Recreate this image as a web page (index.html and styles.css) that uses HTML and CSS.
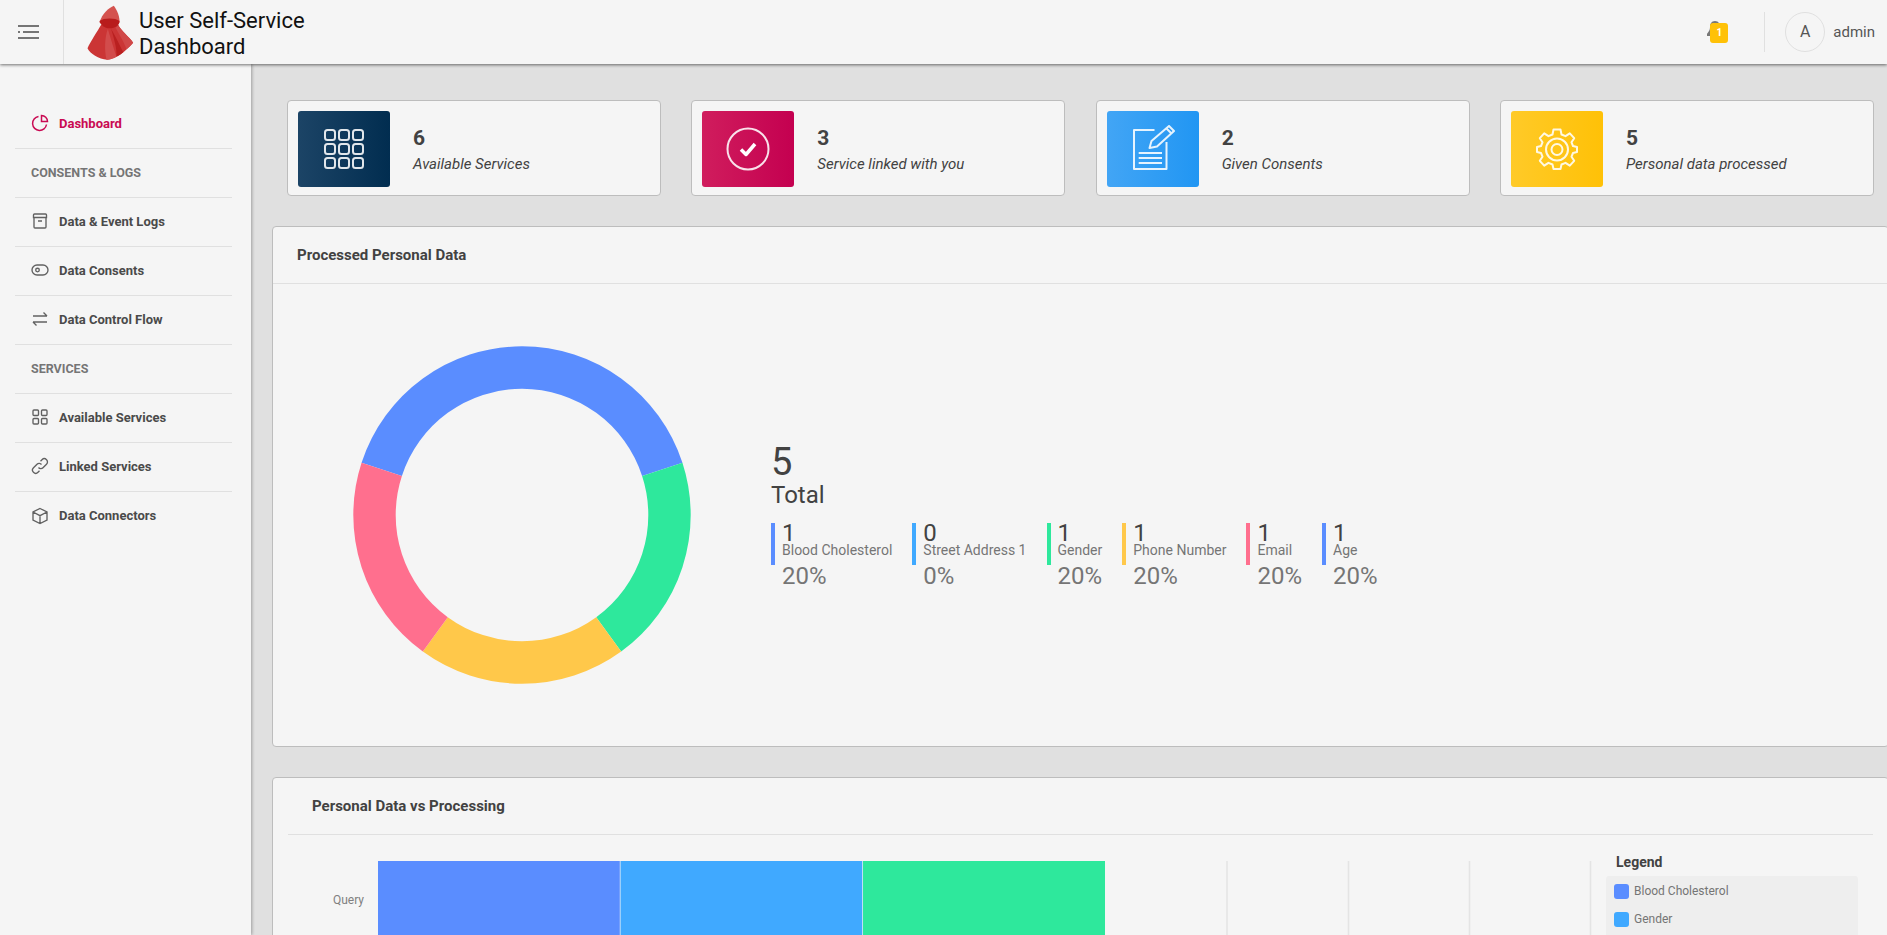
FILE: index.html
```html
<!DOCTYPE html>
<html lang="en">
<head>
  <meta charset="UTF-8" />
  <meta name="viewport" content="width=device-width, initial-scale=1.0"/>
  <title>User Self-Service Dashboard</title>
  <link rel="stylesheet" href="styles.css">
</head>
<body>

  <div class="app">
    <div class="header">
      <div class="menu-btn">
        <svg width="22" height="16" viewBox="0 0 22 16" class="menu-icon">
          <path d="M0 2h21M0 8h2M5 8h16M0 14h21"/>
        </svg>
      </div>
      <div class="brand">
        <svg class="logo" width="47" height="55" viewBox="260 20 140 165">
          <path fill="#cb3535" d="M303 78C290 100 270 130 261 150C268 165 295 184 320 184C345 182 375 160 398 133C385 115 360 95 352 78C340 90 315 90 303 78Z"/>
          <path fill="#d24c4c" d="M322 92C312 120 312 155 318 184C330 183 340 180 348 175C340 150 330 120 322 92Z"/>
          <path fill="#b92020" d="M332 92C340 120 350 150 348 175C355 172 362 167 368 162C358 140 345 115 332 92Z"/>
          <path fill="#d04848" d="M345 88C358 110 372 135 378 153C385 147 392 140 398 133C385 115 362 98 352 78Z"/>
          <path fill="#d4524e" d="M340 22C325 28 305 45 297 72C305 85 345 90 357 72C358 55 350 35 340 22Z"/>
          <path fill="#b81c1c" d="M297 68C310 58 345 58 357 68C358 80 345 90 327 90C312 90 300 80 297 68Z"/>
        </svg>
        <div class="brand-name">User Self-Service<br>Dashboard</div>
      </div>
      <div class="header-right">
        <div class="bell">
          <svg width="16" height="18" viewBox="0 0 16 18"><path fill="#777" d="M8 0C4.5 0 3 3 3 6C3 10 1 11 0 13V15H16V13C15 11 13 10 13 6C13 3 11.500 0 8 0Z"/></svg>
          <span class="badge">1</span>
        </div>
        <div class="user">
          <div class="avatar">A</div>
          <span class="user-name">admin</span>
        </div>
      </div>
    </div>

    <div class="layout">
      <div class="sidebar">
        <a class="nav-item active">
          <svg class="nav-icon" viewBox="0 0 18 18"><path d="M7.500 2.500A7 7 0 1 0 15.500 10.500"/><path d="M10.500 1.500A6 6 0 0 1 16.500 7.500H10.500Z"/></svg>
          Dashboard
        </a>
        <div class="nav-title">CONSENTS &amp; LOGS</div>
        <a class="nav-item">
          <svg class="nav-icon" viewBox="0 0 18 18"><path d="M3.500 2h11a1 1 0 0 1 1 1v2.500h-13V3a1 1 0 0 1 1-1zM3 5.500V15a1 1 0 0 0 1 1h10a1 1 0 0 0 1-1V5.500M7 9h4"/></svg>
          Data &amp; Event Logs
        </a>
        <a class="nav-item">
          <svg class="nav-icon" viewBox="0 0 18 18"><rect x="1" y="4" width="16" height="10" rx="5"/><circle cx="6.500" cy="9" r="1.800"/></svg>
          Data Consents
        </a>
        <a class="nav-item">
          <svg class="nav-icon" viewBox="0 0 18 18"><path d="M2 6h14M12.500 2.500L16 6M16 12H2M5.500 15.500L2 12"/></svg>
          Data Control Flow
        </a>
        <div class="nav-title">SERVICES</div>
        <a class="nav-item">
          <svg class="nav-icon" viewBox="0 0 18 18"><rect x="2" y="2" width="5.500" height="5.500" rx="1"/><rect x="10.500" y="2" width="5.500" height="5.500" rx="1"/><rect x="2" y="10.500" width="5.500" height="5.500" rx="1"/><rect x="10.500" y="10.500" width="5.500" height="5.500" rx="1"/></svg>
          Available Services
        </a>
        <a class="nav-item">
          <svg class="nav-icon" viewBox="0 0 18 18"><path d="M7.500 10.500A3 3 0 0 0 12 10.800L15.500 7.300A3.200 3.200 0 0 0 11 2.700L9.500 4.200"/><path d="M10.500 7.500A3 3 0 0 0 6 7.200L2.500 10.700A3.200 3.200 0 0 0 7 15.300L8.500 13.800"/></svg>
          Linked Services
        </a>
        <a class="nav-item">
          <svg class="nav-icon" viewBox="0 0 18 18"><path d="M9 1.500L16 5V13L9 16.500L2 13V5ZM2 5L9 8.700L16 5M9 8.700V16.500"/></svg>
          Data Connectors
        </a>
      </div>

      <div class="main">
        <div class="stats">
          <div class="stat-card">
            <div class="stat-icon navy">
              <svg width="42" height="42" viewBox="0 0 42 42" class="white-icon">
                <rect x="2" y="2" width="10" height="10" rx="2.500"/><rect x="16" y="2" width="10" height="10" rx="2.500"/><rect x="30" y="2" width="10" height="10" rx="2.500"/>
                <rect x="2" y="16" width="10" height="10" rx="2.500"/><rect x="16" y="16" width="10" height="10" rx="2.500"/><rect x="30" y="16" width="10" height="10" rx="2.500"/>
                <rect x="2" y="30" width="10" height="10" rx="2.500"/><rect x="16" y="30" width="10" height="10" rx="2.500"/><rect x="30" y="30" width="10" height="10" rx="2.500"/>
              </svg>
            </div>
            <div class="stat-text"><b>6</b><i>Available Services</i></div>
          </div>
          <div class="stat-card">
            <div class="stat-icon pink">
              <svg width="44" height="44" viewBox="0 0 44 44" class="white-icon">
                <circle cx="22" cy="22" r="20.500"/>
                <path class="thick" d="M15 22.500L20 27.500L29 17"/>
              </svg>
            </div>
            <div class="stat-text"><b>3</b><i>Service linked with you</i></div>
          </div>
          <div class="stat-card">
            <div class="stat-icon blue">
              <svg width="44" height="48" viewBox="0 0 44 48" class="white-icon">
                <path d="M23.500 5H3V44H35.500V17"/>
                <path d="M7.700 28H31M7.700 33H31M7.700 38H31"/>
                <path d="M18.500 23L20.500 16L38 1L43 6L26 21.500ZM35.500 3.500L40.500 8.500"/>
              </svg>
            </div>
            <div class="stat-text"><b>2</b><i>Given Consents</i></div>
          </div>
          <div class="stat-card">
            <div class="stat-icon yellow">
              <svg width="42" height="42" viewBox="0 0 42 42" class="white-icon">
                <path d="M17.500 1.500H24.500L25.500 6.500L29.500 8.200L33.800 5.300L38.200 10.200L35.500 14.300L37 18L41 19V24L37 25L35.500 28.700L38.200 32.800L33.800 37.700L29.500 34.800L25.500 36.500L24.500 41H17.500L16.500 36.500L12.500 34.800L8.200 37.700L3.800 32.800L6.500 28.700L5 25L1 24V19L5 18L6.500 14.300L3.800 10.200L8.200 5.300L12.500 8.200L16.500 6.500Z"/>
                <circle cx="21" cy="21.500" r="11"/>
                <circle cx="21" cy="21.500" r="5.500"/>
              </svg>
            </div>
            <div class="stat-text"><b>5</b><i>Personal data processed</i></div>
          </div>
        </div>

        <div class="panel">
          <div class="panel-head">Processed Personal Data</div>
          <div class="pie-body">
            <svg class="donut" width="340" height="340" viewBox="-170 -170 340 340">
              <path fill="#5a8dff" d="M-160.44 -52.13A168.7 168.7 0 0 1 160.44 -52.13L120.12 -39.03A126.3 126.3 0 0 0 -120.12 -39.03Z"/>
              <path fill="#2ee89c" d="M160.44 -52.13A168.7 168.7 0 0 1 99.16 136.48L74.24 102.18A126.3 126.3 0 0 0 120.12 -39.03Z"/>
              <path fill="#ffc84a" d="M99.16 136.48A168.7 168.7 0 0 1 -99.16 136.48L-74.24 102.18A126.3 126.3 0 0 0 74.24 102.18Z"/>
              <path fill="#ff6f8e" d="M-99.16 136.48A168.7 168.7 0 0 1 -160.44 -52.13L-120.12 -39.03A126.3 126.3 0 0 0 -74.24 102.18Z"/>
            </svg>
            <div class="pie-info">
              <div class="total-num">5</div>
              <div class="total-label">Total</div>
              <div class="pie-items">
                <div class="pie-item"><div class="item-bar c-blue"><div class="item-num">1</div><div class="item-label">Blood Cholesterol</div></div><div class="item-pct">20%</div></div>
                <div class="pie-item"><div class="item-bar c-sky"><div class="item-num">0</div><div class="item-label">Street Address 1</div></div><div class="item-pct">0%</div></div>
                <div class="pie-item"><div class="item-bar c-green"><div class="item-num">1</div><div class="item-label">Gender</div></div><div class="item-pct">20%</div></div>
                <div class="pie-item"><div class="item-bar c-yellow"><div class="item-num">1</div><div class="item-label">Phone Number</div></div><div class="item-pct">20%</div></div>
                <div class="pie-item"><div class="item-bar c-pink"><div class="item-num">1</div><div class="item-label">Email</div></div><div class="item-pct">20%</div></div>
                <div class="pie-item"><div class="item-bar c-blue"><div class="item-num">1</div><div class="item-label">Age</div></div><div class="item-pct">20%</div></div>
              </div>
            </div>
          </div>
        </div>

        <div class="panel">
          <div class="chart-head">Personal Data vs Processing</div>
          <div class="chart-body">
            <svg class="chart" width="1310" height="78" viewBox="0 0 1310 78">
              <rect x="90" y="0" width="241.800" height="78" fill="#5a8dff"/>
              <rect x="332.500" y="0" width="241.800" height="78" fill="#40a9ff"/>
              <rect x="575" y="0" width="242" height="78" fill="#2ee89c"/>
              <path class="grid-line" d="M939 0V78M1060.500 0V78M1181.500 0V78M1302.500 0V78"/>
              <text class="axis-label" x="76" y="43" text-anchor="end">Query</text>
            </svg>
            <div class="legend">
              <div class="legend-title">Legend</div>
              <div class="legend-box">
                <div class="legend-row"><span class="swatch c-blue"></span>Blood Cholesterol</div>
                <div class="legend-row"><span class="swatch c-sky"></span>Gender</div>
              </div>
            </div>
          </div>
        </div>
      </div>
    </div>
  </div>

</body>
</html>
```

FILE: styles.css
```css
html, body {
  margin: 0;
  height: 100%;
  overflow: hidden;
}
body {
  font-family: Roboto, sans-serif;
  background: #e0e0e0;
  color: #424242;
}
.app {
  height: 935px;
  display: flex;
  flex-direction: column;
  overflow: hidden;
}

/* header */
.header {
  height: 64px;
  flex: none;
  display: flex;
  align-items: center;
  background: #f5f5f5;
  box-shadow: 0 1px 3px rgba(0, 0, 0, .55);
  position: relative;
  z-index: 2;
}
.menu-btn {
  width: 64px;
  height: 64px;
  padding-left: 18px;
  box-sizing: border-box;
  display: flex;
  align-items: center;
  border-right: 1px solid #e0e0e0;
}
.menu-icon {
  fill: none;
  stroke: #757575;
  stroke-width: 2;
}
.brand {
  display: flex;
  align-items: center;
  margin-left: 23px;
}
.logo {
  margin-right: 5px;
}
.brand-name {
  font-size: 22px;
  line-height: 26px;
  padding-top: 3px;
  color: #111;
}
.header-right {
  margin-left: auto;
  display: flex;
  align-items: center;
}
.bell {
  position: relative;
  width: 21px;
  height: 22px;
}
.badge {
  position: absolute;
  left: 3px;
  top: 2px;
  width: 18px;
  height: 20px;
  border-radius: 3px;
  background: #ffc107;
  color: #fff;
  font-size: 10px;
  font-weight: 700;
  line-height: 20px;
  text-align: center;
}
.user {
  margin-left: 36px;
  padding-left: 20px;
  height: 40px;
  display: flex;
  align-items: center;
  border-left: 1px solid #e0e0e0;
}
.avatar {
  width: 38px;
  height: 38px;
  border: 1px solid #e0e0e0;
  border-radius: 50%;
  text-align: center;
  line-height: 38px;
  font-size: 16px;
  color: #555;
}
.user-name {
  margin-left: 8px;
  margin-right: 12px;
  font-size: 15px;
  color: #555;
}

.layout {
  flex: 1;
  display: flex;
  min-height: 0;
}

/* sidebar */
.sidebar {
  width: 251px;
  flex: none;
  box-sizing: border-box;
  padding: 36px 19px 0 15px;
  background: #f5f5f5;
  box-shadow: 1px 0 3px rgba(0, 0, 0, .3);
  position: relative;
  z-index: 1;
}
.nav-item, .nav-title {
  height: 49px;
  box-sizing: border-box;
  padding-bottom: 2px;
  display: flex;
  align-items: center;
  border-bottom: 1px solid #e0e0e0;
  font-weight: 700;
}
.nav-item {
  padding-left: 16px;
  font-size: 13px;
  color: #4a4a4a;
}
.nav-item:last-child {
  border-bottom: none;
}
.nav-item.active {
  color: #c90a52;
}
.nav-title {
  padding-left: 16px;
  font-size: 12.500px;
  color: #757575;
}
.nav-icon {
  width: 18px;
  height: 18px;
  margin-right: 10px;
  fill: none;
  stroke: #616161;
  stroke-width: 1.350;
}
.nav-item.active .nav-icon {
  stroke: #c90a52;
  stroke-width: 1.500;
}

/* top cards */
.main {
  flex: 1;
  min-width: 0;
  padding: 36px 0 0 21px;
}
.stats {
  display: grid;
  grid-template-columns: repeat(4, 374px);
  column-gap: 30.330px;
  padding-left: 15px;
  margin-bottom: 30px;
}
.stat-card {
  height: 96px;
  box-sizing: border-box;
  display: flex;
  align-items: center;
  padding: 2px 0 0 10px;
  background: #f5f5f5;
  border: 1px solid #bdbdbd;
  border-radius: 4px;
}
.stat-icon {
  width: 92px;
  height: 76px;
  border-radius: 3px;
  display: flex;
  align-items: center;
  justify-content: center;
}
.navy { background: linear-gradient(to right, #1c4466, #012d50); }
.pink { background: linear-gradient(to right, #d01d5d, #c40050); }
.blue { background: linear-gradient(to right, #42a5f5, #2196f3); }
.yellow { background: linear-gradient(to right, #ffca28, #ffc107); }
.white-icon {
  fill: none;
  stroke: #fff;
  stroke-opacity: .88;
  stroke-width: 2;
  stroke-linejoin: round;
}
.white-icon .thick {
  stroke-width: 3.500;
  stroke-opacity: 1;
}
.stat-text {
  margin-left: 23px;
}
.stat-text b {
  display: block;
  font-size: 21px;
  line-height: 26px;
  font-weight: 700;
}
.stat-text i {
  display: block;
  margin-top: 3px;
  font-size: 15px;
  line-height: 20px;
}

/* panels */
.panel {
  width: 1617px;
  box-sizing: border-box;
  margin-bottom: 30px;
  background: #f5f5f5;
  border: 1px solid #bdbdbd;
  border-radius: 4px;
}
.panel-head {
  height: 57px;
  box-sizing: border-box;
  padding-left: 24px;
  border-bottom: 1px solid #e0e0e0;
  font-size: 15px;
  font-weight: 700;
  line-height: 57px;
}
.pie-body {
  height: 462px;
  display: flex;
  align-items: center;
  padding-left: 79px;
}
.donut {
  flex: none;
  margin-right: 79px;
}
.total-num {
  margin-top: 6.500px;
  font-size: 38px;
  line-height: 38px;
}
.total-label {
  font-size: 24px;
  line-height: 28px;
  margin-bottom: 14.500px;
}
.pie-items {
  display: flex;
  gap: 20px;
}
.item-bar {
  height: 42px;
  box-sizing: border-box;
  padding-left: 7px;
  border-left: 4px solid;
}
.item-num {
  font-size: 24px;
  line-height: 20px;
}
.item-label {
  font-size: 14px;
  line-height: 14px;
  color: #757575;
}
.item-pct {
  margin-left: 11px;
  padding-bottom: 7px;
  font-size: 24px;
  line-height: 22px;
  color: #757575;
}
.c-blue { border-color: #5a8dff; background-color: #5a8dff; }
.c-sky { border-color: #40a9ff; background-color: #40a9ff; }
.c-green { border-color: #2ee89c; }
.c-yellow { border-color: #ffc84a; }
.c-pink { border-color: #ff6f8e; }
.item-bar.c-blue, .item-bar.c-sky { background-color: transparent; }

.chart-head {
  height: 57px;
  box-sizing: border-box;
  margin: 0 15px;
  padding-left: 24px;
  border-bottom: 1px solid #e0e0e0;
  font-size: 15px;
  font-weight: 700;
  line-height: 56px;
}
.chart-body {
  display: flex;
  margin: 26px 15px 0;
}
.chart {
  flex: none;
  display: block;
}
.grid-line {
  fill: none;
  stroke: #e4e4e4;
  stroke-width: 1.500;
}
.axis-label {
  font-size: 12px;
  fill: #808080;
}
.legend {
  margin-left: 8px;
  width: 252px;
}
.legend-title {
  height: 15px;
  padding-left: 10px;
  font-size: 14px;
  font-weight: 700;
  line-height: 2px;
}
.legend-box {
  padding: 8px 8px 13px;
  background: #eee;
  border-radius: 3px;
}
.legend-row {
  height: 28px;
  display: flex;
  align-items: flex-start;
  font-size: 12px;
  line-height: 14px;
  color: #757575;
}
.swatch {
  width: 15px;
  height: 15px;
  margin-right: 5px;
  border-radius: 3px;
}
```
